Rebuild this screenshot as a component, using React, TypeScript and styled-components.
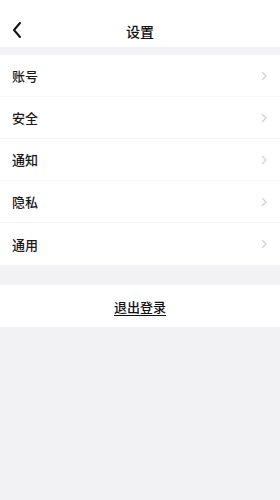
import React from 'react'
import styled, { createGlobalStyle } from 'styled-components'

const GlobalStyle = createGlobalStyle`
  html, body {
    margin: 0;
    padding: 0;
    background: #f2f2f5;
    font-family: "Noto Sans CJK SC", "Noto Sans", sans-serif;
  }
`

const Page = styled.div`
  min-height: 500px;
  background: #f2f2f5;
  display: flex;
  flex-direction: column;
`

const Header = styled.header`
  height: 47px;
  background: #fff;
  display: flex;
  align-items: center;
  justify-content: center;
  position: relative;
  padding-top: 14px;
  box-sizing: border-box;
`

const BackButton = styled.button`
  position: absolute;
  left: 8px;
  top: 21px;
  width: 18px;
  height: 18px;
  padding: 0;
  border: none;
  background: none;
  display: flex;
  align-items: center;
  justify-content: center;
`

const Title = styled.h1`
  margin: 0;
  font-size: 14px;
  font-weight: 500;
  color: #111;
`

const Group = styled.section<{ $gap: number }>`
  margin-top: ${p => p.$gap}px;
  background: #fff;
`

const Row = styled.div`
  height: 42px;
  display: flex;
  align-items: center;
  justify-content: space-between;
  padding: 0 12px;
  border-bottom: 1px solid #f6f6f8;
  box-sizing: border-box;

  &:last-child {
    border-bottom: none;
  }
`

const Label = styled.span`
  font-size: 13px;
  font-weight: 500;
  color: #1a1a1a;
`

const Logout = styled.div`
  height: 42px;
  display: flex;
  align-items: center;
  justify-content: center;
  font-size: 13px;
  font-weight: 500;
  color: #111;
  text-decoration: underline;
  text-underline-offset: 3px;
`

const Chevron = () => (
  <svg width="8" height="12" viewBox="0 0 8 12">
    <path d="M2.5 2.5 L6 6 L2.5 9.5" fill="none" stroke="#d2d2d6" strokeWidth="1.3" strokeLinecap="round" strokeLinejoin="round" />
  </svg>
)

const items = ['账号', '安全', '通知', '隐私', '通用']

export default function App() {
  return (
    <Page>
      <GlobalStyle />
      <Header>
        <BackButton>
          <svg width="14" height="18" viewBox="0 0 14 18">
            <path d="M10 2 L4 9 L10 16" fill="none" stroke="#111" strokeWidth="2" strokeLinecap="round" strokeLinejoin="round" />
          </svg>
        </BackButton>
        <Title>设置</Title>
      </Header>
      <Group $gap={8}>
        {items.map(item => (
          <Row key={item}>
            <Label>{item}</Label>
            <Chevron />
          </Row>
        ))}
      </Group>
      <Group $gap={20}>
        <Logout>退出登录</Logout>
      </Group>
    </Page>
  )
}
